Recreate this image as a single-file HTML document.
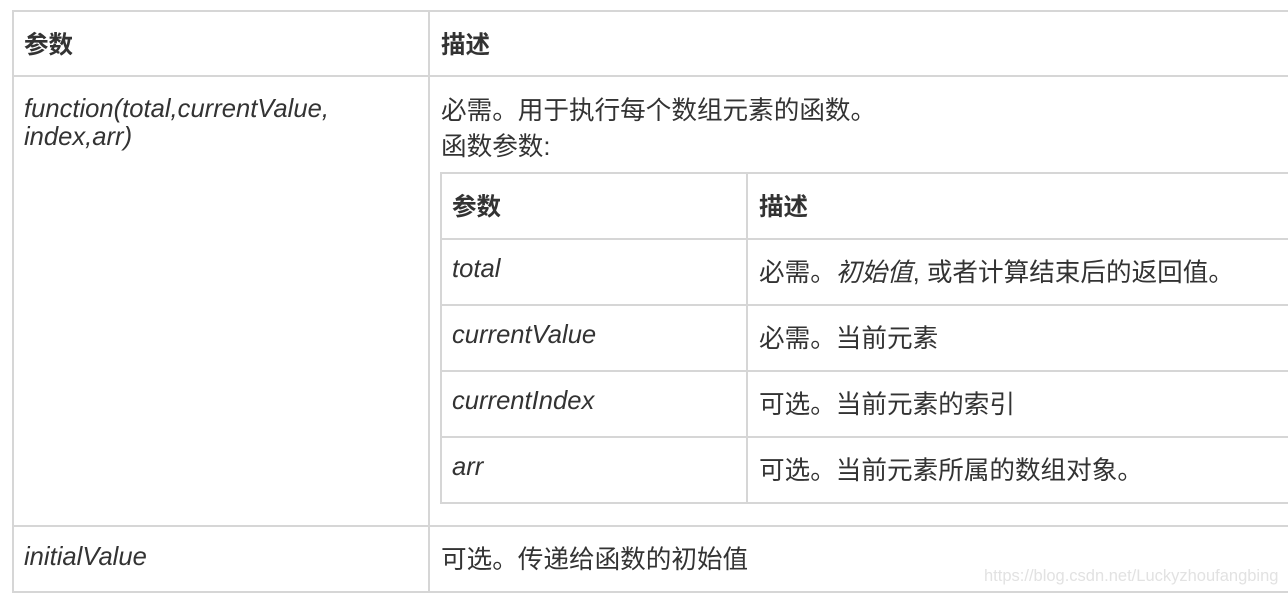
<!DOCTYPE html>
<html><head><meta charset="utf-8"><style>
body{margin:0;width:1288px;height:594px;background:#fff;overflow:hidden;position:relative;font-family:"Liberation Sans","Noto Sans CJK SC",sans-serif;color:#333;font-size:25.6px}
.h{position:absolute;background:#d6d6d6;height:2px}
.v{position:absolute;background:#d6d6d6;width:2px}
.t{position:absolute;white-space:nowrap;line-height:28px}
b{font-weight:bold;font-size:24.5px}
i{font-style:italic}
</style></head><body>
<div class="h" style="left:12px;top:10px;width:1276px"></div>
<div class="h" style="left:12px;top:75px;width:1276px"></div>
<div class="h" style="left:12px;top:525px;width:1276px"></div>
<div class="h" style="left:12px;top:591px;width:1276px"></div>
<div class="v" style="left:12px;top:10px;height:583px"></div>
<div class="v" style="left:428px;top:10px;height:583px"></div>

<div class="h" style="left:440px;top:172px;width:848px"></div>
<div class="h" style="left:440px;top:238px;width:848px"></div>
<div class="h" style="left:440px;top:304px;width:848px"></div>
<div class="h" style="left:440px;top:370px;width:848px"></div>
<div class="h" style="left:440px;top:436px;width:848px"></div>
<div class="h" style="left:440px;top:502px;width:848px"></div>
<div class="v" style="left:440px;top:172px;height:332px"></div>
<div class="v" style="left:746px;top:172px;height:332px"></div>

<div class="t" style="left:24px;top:31px"><b>参数</b></div>
<div class="t" style="left:441px;top:31px"><b>描述</b></div>
<div class="t" style="left:24px;top:95px"><i>function(total,currentValue,</i></div>
<div class="t" style="left:24px;top:123px"><i>index,arr)</i></div>
<div class="t" style="left:441px;top:97px">必需。用于执行每个数组元素的函数。</div>
<div class="t" style="left:441px;top:133px">函数参数:</div>

<div class="t" style="left:452px;top:193px"><b>参数</b></div>
<div class="t" style="left:759px;top:193px"><b>描述</b></div>
<div class="t" style="left:452px;top:255px"><i>total</i></div>
<div class="t" style="left:759px;top:259px">必需。<i>初始值</i>, 或者计算结束后的返回值。</div>
<div class="t" style="left:452px;top:321px"><i>currentValue</i></div>
<div class="t" style="left:759px;top:325px">必需。当前元素</div>
<div class="t" style="left:452px;top:387px"><i>currentIndex</i></div>
<div class="t" style="left:759px;top:391px">可选。当前元素的索引</div>
<div class="t" style="left:452px;top:453px"><i>arr</i></div>
<div class="t" style="left:759px;top:457px">可选。当前元素所属的数组对象。</div>

<div class="t" style="left:24px;top:543px"><i>initialValue</i></div>
<div class="t" style="left:441px;top:546px">可选。传递给函数的初始值</div>
<div class="t" style="left:984px;top:562px;font-size:16.5px;color:#e2e2e2">https://blog.csdn.net/Luckyzhoufangbing</div>
</body></html>
